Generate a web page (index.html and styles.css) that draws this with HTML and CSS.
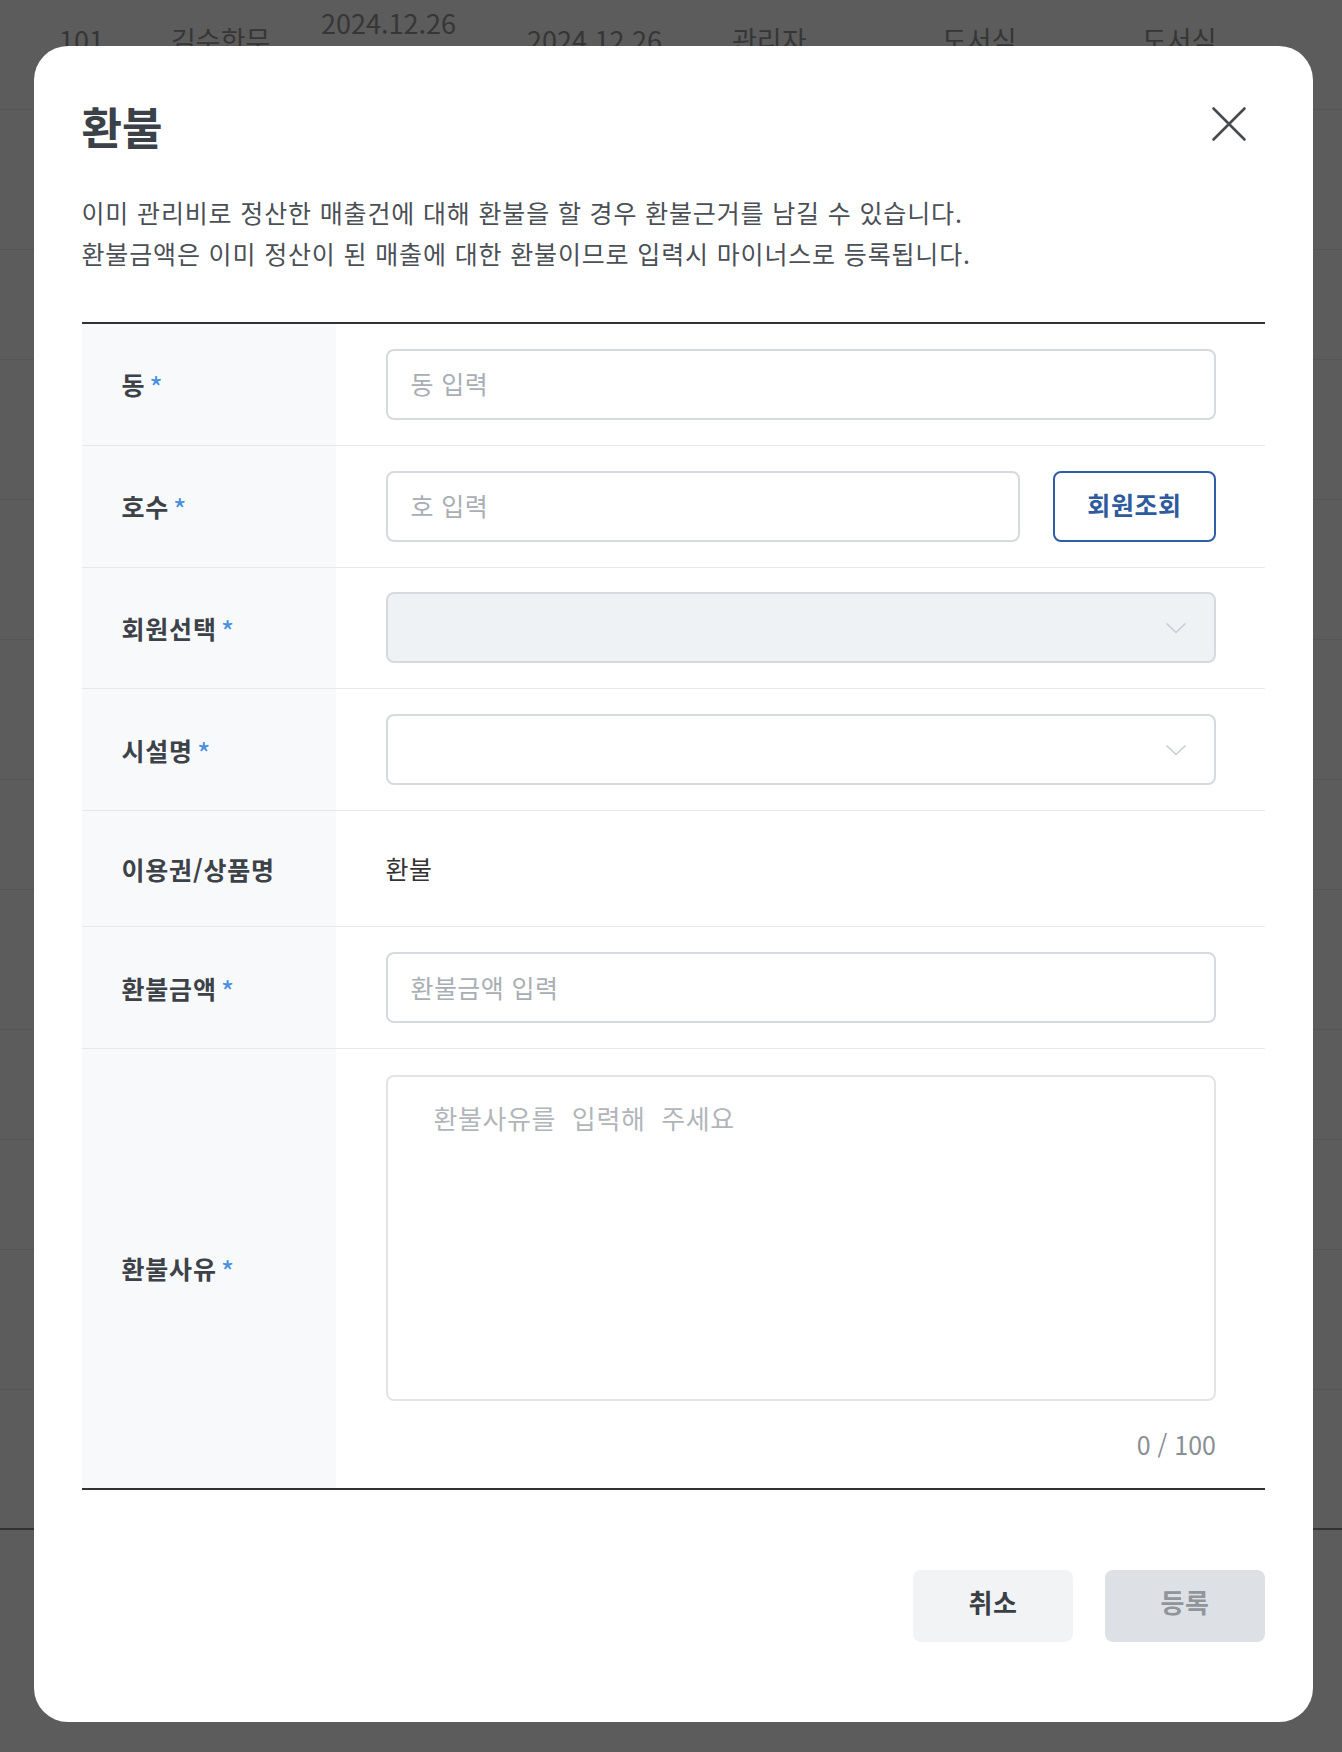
FILE: index.html
```html
<!DOCTYPE html>
<html lang="ko">
<head>
<meta charset="utf-8">
<title>환불</title>
<link rel="stylesheet" href="styles.css">
</head>
<body>
  <div class="bg-table">
    <div class="bg-head">
      <span class="bg-cell c1">101</span>
      <span class="bg-cell c2">김수한무</span>
      <span class="bg-cell c3 up">2024.12.26</span>
      <span class="bg-cell c4">2024.12.26</span>
      <span class="bg-cell c5">관리자</span>
      <span class="bg-cell c6">도서식</span>
      <span class="bg-cell c7">도서식</span>
    </div>
    <div class="bg-row tall"></div>
    <div class="bg-row short"></div>
    <div class="bg-row tall"></div>
    <div class="bg-row tall"></div>
    <div class="bg-row tall"></div>
    <div class="bg-row short"></div>
    <div class="bg-row tall"></div>
    <div class="bg-row short"></div>
    <div class="bg-row short"></div>
    <div class="bg-row tall"></div>
    <div class="bg-row tall last"></div>
  </div>

  <div class="overlay">
    <div class="modal">
      <div class="modal-head">
        <h1 class="title">환불</h1>
        <button class="close" type="button" aria-label="닫기">
          <svg width="40" height="40" viewBox="0 0 40 40"><path d="M4.5 4.5 L35.5 35.5 M35.5 4.5 L4.5 35.5" stroke="#474b50" stroke-width="2.6" stroke-linecap="round" fill="none"/></svg>
        </button>
      </div>
      <p class="desc">이미 관리비로 정산한 매출건에 대해 환불을 할 경우 환불근거를 남길 수 있습니다.<br>환불금액은 이미 정산이 된 매출에 대한 환불이므로 입력시 마이너스로 등록됩니다.</p>

      <div class="form">
        <div class="row">
          <div class="label"><span>동<em class="req">*</em></span></div>
          <div class="field"><input class="input" type="text" placeholder="동 입력"></div>
        </div>
        <div class="row">
          <div class="label"><span>호수<em class="req">*</em></span></div>
          <div class="field field--split">
            <input class="input" type="text" placeholder="호 입력">
            <button class="btn-outline" type="button">회원조회</button>
          </div>
        </div>
        <div class="row">
          <div class="label"><span>회원선택<em class="req">*</em></span></div>
          <div class="field">
            <div class="select select--disabled">
              <svg class="chev" width="22" height="12" viewBox="0 0 22 12"><path d="M1.5 1.5 L11 10.5 L20.5 1.5" stroke="#c9cdd2" stroke-width="1.6" fill="none"/></svg>
            </div>
          </div>
        </div>
        <div class="row">
          <div class="label"><span>시설명<em class="req">*</em></span></div>
          <div class="field">
            <div class="select">
              <svg class="chev" width="22" height="12" viewBox="0 0 22 12"><path d="M1.5 1.5 L11 10.5 L20.5 1.5" stroke="#c9cdd2" stroke-width="1.6" fill="none"/></svg>
            </div>
          </div>
        </div>
        <div class="row row--text">
          <div class="label"><span>이용권/상품명</span></div>
          <div class="field">환불</div>
        </div>
        <div class="row">
          <div class="label"><span>환불금액<em class="req">*</em></span></div>
          <div class="field"><input class="input" type="text" placeholder="환불금액 입력"></div>
        </div>
        <div class="row row--area">
          <div class="label"><span>환불사유<em class="req">*</em></span></div>
          <div class="field">
            <textarea class="area" placeholder="환불사유를  입력해  주세요"></textarea>
            <div class="count">0 / 100</div>
          </div>
        </div>
      </div>

      <div class="foot">
        <button class="btn btn--cancel" type="button">취소</button>
        <button class="btn btn--submit" type="button">등록</button>
      </div>
    </div>
  </div>
</body>
</html>
```

FILE: styles.css
```css
* {
  box-sizing: border-box;
  margin: 0;
  padding: 0;
}

html, body {
  width: 1342px;
  height: 1752px;
  overflow: hidden;
}

body {
  background: #5c5c5c;
  font-family: "Noto Sans CJK KR", "Noto Sans", sans-serif;
}

/* background table (dimmed) */
.bg-table {
  width: 100%;
}

.bg-head {
  height: 109.5px;
  border-bottom: 1px solid #555555;
  display: flex;
  align-items: flex-start;
  padding-left: 59px;
}

.bg-cell {
  font-size: 27px;
  line-height: 27px;
  color: #363636;
  padding-top: 26px;
  white-space: nowrap;
}

.bg-cell.up { padding-top: 9px; }
.c1 { width: 112px; }
.c2 { width: 150px; }
.c3 { width: 206px; }
.c4 { width: 205px; }
.c5 { width: 210px; }
.c6 { width: 200px; }

.bg-row {
  border-bottom: 1px solid #555555;
}

.bg-row.tall { height: 140px; }
.bg-row.short { height: 110px; }
.bg-row.last { border-bottom: 2px solid #333333; }

/* modal */
.overlay {
  position: fixed;
  inset: 0;
  padding: 46px 29px 0 33.5px;
}

.modal {
  background: #ffffff;
  border-radius: 34px;
  padding: 48px 48px 80px;
}

.modal-head {
  display: flex;
  align-items: center;
  justify-content: space-between;
  height: 64px;
}

.title {
  font-size: 44px;
  line-height: 64px;
  font-weight: 700;
  color: #3b4148;
}

.close {
  width: 40px;
  height: 40px;
  margin-right: 16px;
  margin-bottom: 4px;
  border: 0;
  background: none;
  display: flex;
}

.desc {
  margin-top: 33.5px;
  font-size: 25px;
  line-height: 41px;
  color: #4b5056;
  letter-spacing: 0.85px;
}

.form {
  margin-top: 48.5px;
  border-top: 2px solid #333333;
  border-bottom: 2px solid #333333;
}

.row {
  display: grid;
  grid-template-columns: 254px 1fr;
  border-bottom: 1px solid #e6e8eb;
}

.row:last-child {
  border-bottom: 0;
}

.label {
  background: #f7f9fb;
  padding-left: 40px;
  display: flex;
  align-items: center;
  font-size: 25px;
  font-weight: 700;
  color: #3d4248;
  letter-spacing: 0.8px;
}

.req {
  font-style: normal;
  font-weight: 400;
  font-size: 29px;
  line-height: 1;
  color: #4a8fe0;
  margin-left: 4px;
  vertical-align: -4px;
}

.field {
  padding: 24.9px 49px 24.9px 50px;
}

.field--split {
  display: flex;
  gap: 33px;
}

.input {
  display: block;
  width: 100%;
  height: 71px;
  border: 2px solid #d6d9dd;
  border-radius: 8px;
  padding: 0 23px 2px;
  font-family: inherit;
  font-size: 25px;
  letter-spacing: 0.4px;
  color: #333333;
  background: #ffffff;
  outline: none;
}

.input::placeholder {
  color: #a9aeb4;
}

.field--split .input {
  flex: 1;
}

.btn-outline {
  width: 163px;
  flex: none;
  height: 71px;
  border: 2px solid #2f5ea6;
  border-radius: 8px;
  background: #ffffff;
  font-family: inherit;
  font-size: 25px;
  font-weight: 700;
  letter-spacing: 0.6px;
  color: #2e5a9e;
  padding-bottom: 4px;
}

.select {
  height: 71px;
  border: 2px solid #d6d9dd;
  border-radius: 8px;
  background: #ffffff;
  display: flex;
  align-items: center;
  justify-content: flex-end;
  padding-right: 27px;
}

.select--disabled {
  background: #eff2f4;
}

.row--text .field {
  padding: 40px 49px 40px 50px;
  font-size: 25px;
  line-height: 35.3px;
  letter-spacing: 0.6px;
  color: #333333;
}

.row--area .field {
  padding: 26px 49px 25.5px 50px;
}

.area {
  display: block;
  width: 100%;
  height: 326px;
  border: 2px solid #e2e4e7;
  border-radius: 8px;
  padding: 22.5px 46px;
  font-family: inherit;
  font-size: 26px;
  line-height: 36px;
  letter-spacing: 0.6px;
  color: #333333;
  resize: none;
  outline: none;
}

.area::placeholder {
  color: #b1b5ba;
}

.count {
  margin-top: 25px;
  text-align: right;
  font-size: 25px;
  line-height: 36px;
  color: #8a8f95;
}

.foot {
  display: flex;
  justify-content: flex-end;
  gap: 32px;
  margin-top: 80px;
}

.btn {
  width: 160px;
  height: 72px;
  border: 0;
  border-radius: 8px;
  font-family: inherit;
  font-size: 26px;
  font-weight: 700;
  letter-spacing: 0.5px;
  padding-bottom: 8px;
}

.btn--cancel {
  background: #f1f3f5;
  color: #3a3f45;
}

.btn--submit {
  background: #dde1e5;
  color: #8f959b;
}
```
